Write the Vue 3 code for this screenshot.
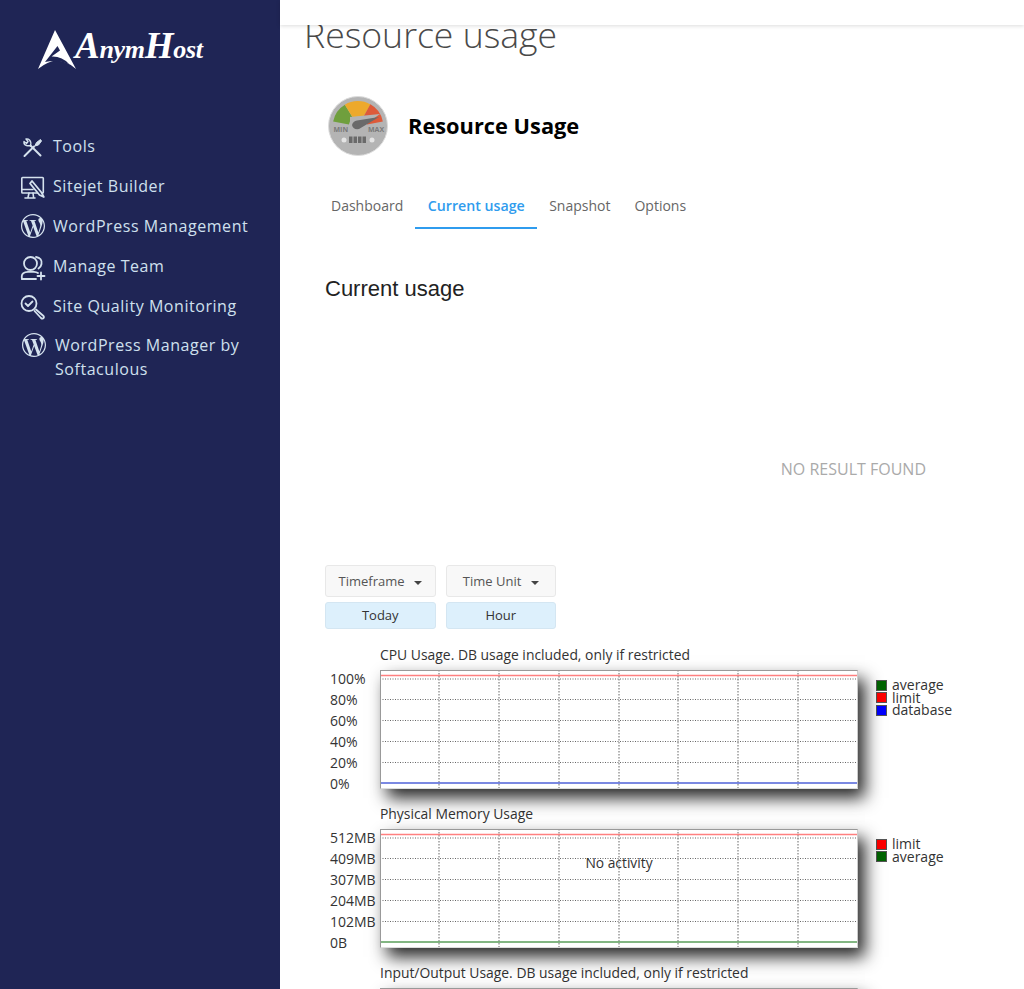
<script setup>
const wpPath = 'M21.469 6.825c.84 1.537 1.318 3.3 1.318 5.175 0 3.979-2.156 7.456-5.363 9.325l3.295-9.527c.615-1.54.82-2.771.82-3.864 0-.405-.026-.78-.07-1.11m-7.981.105c.647-.03 1.232-.105 1.232-.105.582-.075.514-.93-.067-.899 0 0-1.755.135-2.88.135-1.064 0-2.85-.15-2.85-.15-.585-.03-.661.855-.075.885 0 0 .54.061 1.125.09l1.68 4.605-2.37 7.08L5.354 6.9c.649-.03 1.234-.1 1.234-.1.585-.075.516-.93-.065-.896 0 0-1.746.138-2.874.138-.2 0-.438-.008-.69-.015C4.911 3.15 8.235 1.215 12 1.215c2.809 0 5.365 1.072 7.286 2.833-.046-.003-.091-.009-.141-.009-1.06 0-1.812.923-1.812 1.914 0 .89.513 1.643 1.06 2.531.411.72.89 1.643.89 2.977 0 .915-.354 1.994-.821 3.479l-1.075 3.585-3.9-11.61.001.014zM12 22.784c-1.059 0-2.081-.153-3.048-.437l3.237-9.406 3.315 9.087c.024.053.05.101.078.149-1.12.393-2.325.609-3.582.609M1.211 12c0-1.564.336-3.05.935-4.39L7.29 21.709C3.694 19.96 1.212 16.271 1.211 12M12 0C5.385 0 0 5.385 0 12s5.385 12 12 12 12-5.385 12-12S18.615 0 12 0'

const navItems = [
  { label: 'Tools', icon: 'tools' },
  { label: 'Sitejet Builder', icon: 'sitejet' },
  { label: 'WordPress Management', icon: 'wp' },
  { label: 'Manage Team', icon: 'team' },
  { label: 'Site Quality Monitoring', icon: 'quality' },
  { label: 'WordPress Manager by Softaculous', icon: 'wp', wrap: true },
]

const tabs = ['Dashboard', 'Current usage', 'Snapshot', 'Options']

const filters = [
  { name: 'Timeframe', value: 'Today' },
  { name: 'Time Unit', value: 'Hour' },
]

const gridX = [59, 119, 179, 239, 298, 358, 418]
const gridY = [9, 29.5, 50.5, 71.5, 92.5]

const charts = [
  {
    title: 'CPU Usage. DB usage included, only if restricted',
    labels: ['100%', '80%', '60%', '40%', '20%', '0%'],
    legend: [
      { name: 'average', color: '#006400' },
      { name: 'limit', color: '#ff0000' },
      { name: 'database', color: '#0000ff' },
    ],
    bottomColor: '#4f62d8',
  },
  {
    title: 'Physical Memory Usage',
    labels: ['512MB', '409MB', '307MB', '204MB', '102MB', '0B'],
    legend: [
      { name: 'limit', color: '#ff0000' },
      { name: 'average', color: '#006400' },
    ],
    bottomColor: '#5a9e5a',
    message: 'No activity',
  },
  {
    title: 'Input/Output Usage. DB usage included, only if restricted',
    labels: [],
    legend: [],
    bottomColor: '#4f62d8',
  },
]
</script>

<template>
  <div class="page">
    <aside class="sidebar">
      <div class="logo">
        <svg class="logo-mark" width="38" height="39" viewBox="0 0 38 39">
          <path d="M17 0 L38 39 Q30 31 18 30.500 Q10 31 0 39 Z" fill="#fff" />
          <path d="M7 32 L19.500 16 L22 20.500 L13.500 26.500 Q24 26 31 34 Q19 29 7 32 Z" fill="#1f2555" />
        </svg>
        <span class="logo-text"><span class="logo-cap">A</span>nym<span class="logo-cap">H</span>ost</span>
      </div>

      <nav class="nav">
        <a
          v-for="item in navItems"
          :key="item.label"
          class="nav-item"
          :class="{ 'nav-item-wrap': item.wrap }"
        >
          <svg class="nav-icon" width="24" height="24" viewBox="0 0 24 24" fill="none" stroke="#d5e2ee" stroke-width="1.600" stroke-linecap="round" stroke-linejoin="round">
            <template v-if="item.icon === 'tools'">
              <path d="M3.500 22 L13 12.500" stroke-width="2" />
              <path d="M14 11.500 L15.500 8.500 L19.500 5.500 L20.500 7 L17.500 11 L14 12" fill="#d5e2ee" stroke-width="1" />
              <path d="M9.500 11.500 L19.500 21.500" stroke-width="2" />
              <path d="M5 5 L7 7.500 L5.500 9.500 L3 7.500 Q2.500 10.500 5.500 11.500 Q8 12 9.500 11.500 Q10.500 8 8.500 6 Q7 4.500 5 5 Z" stroke-width="1.400" />
            </template>
            <template v-else-if="item.icon === 'sitejet'">
              <rect x="0.800" y="3.500" width="21.500" height="15.500" rx="0.800" />
              <path d="M0.800 15.500 H12 M8 19 L7 23.500 M4 24 H14 M12 19 L12.500 23" />
              <path d="M11 7 L20.500 18.500 L22.800 23 L18.500 21 L9 9.500 Z" fill="#1f2555" stroke-width="1.800" />
            </template>
            <template v-else-if="item.icon === 'wp'">
              <path :d="wpPath" fill="#d5e2ee" stroke="none" />
            </template>
            <template v-else-if="item.icon === 'team'">
              <circle cx="9.500" cy="9.500" r="6.500" stroke-width="1.800" />
              <path d="M15 3 Q21.500 4 20.500 10 Q20 13 17.500 14.500" stroke-width="1.800" />
              <path d="M0.800 24 V22 Q1 18 7 17.800 H13 Q15.500 18 17 19 M0.800 25 H15" stroke-width="1.800" />
              <path d="M20 18.500 V25.500 M16.500 22 H23.500" stroke-width="1.800" />
            </template>
            <template v-else>
              <circle cx="8" cy="9.500" r="7.500" stroke-width="1.800" />
              <path d="M4.500 9.500 L7 12 L11.500 7.500" stroke-width="1.800" />
              <path d="M15 15.500 L22.500 22 Q23.500 23.500 22 24.500 Q21 25 20 24 L13.500 17" stroke-width="1.800" />
            </template>
          </svg>
          <span class="nav-label">{{ item.label }}</span>
        </a>
      </nav>
    </aside>

    <main class="main">
      <header class="topbar"></header>
      <h1 class="page-title">Resource usage</h1>

      <div class="plugin-head">
        <svg class="gauge" width="60" height="60" viewBox="-30 -30 60 60">
          <circle r="29.500" fill="#b4b4b4" stroke="#dcdcdc" />
          <path d="M-17 -3 A17 17 0 0 1 -9 -14.500" fill="none" stroke="#6f9f3d" stroke-width="16" />
          <path d="M-9 -14.500 A17 17 0 0 1 8.500 -14.700" fill="none" stroke="#eda92c" stroke-width="16" />
          <path d="M8.500 -14.700 A17 17 0 0 1 17 -3" fill="none" stroke="#dd5a3a" stroke-width="16" />
          <path d="M-8 -9 L22 -12 L-2 5 Q-9 2 -8 -9 Z" fill="#b4b4b4" />
          <path d="M-6 -1 Q-5 -5 -1 -5.500 L21 -9 L1 3 Q-5 4 -6 -1 Z" fill="#6a6a6a" />
          <text class="gauge-text" x="-24.500" y="5.500">MIN</text>
          <text class="gauge-text" x="10" y="5.500">MAX</text>
          <circle cx="-14" cy="14" r="2.500" fill="#e4e4e4" />
          <circle cx="14" cy="14" r="2.500" fill="#e4e4e4" />
          <path d="M-9 10.500 h3.500 v6.500 h-3.500 z M-4.500 10.500 h3.500 v6.500 h-3.500 z M0 10.500 h3.500 v6.500 h-3.500 z M4.500 10.500 h3.500 v6.500 h-3.500 z" fill="#6a6a6a" />
        </svg>
        <h2 class="plugin-name">Resource Usage</h2>
      </div>

      <ul class="tabs">
        <li
          v-for="tab in tabs"
          :key="tab"
          class="tab"
          :class="{ 'tab-active': tab === 'Current usage' }"
        >
          {{ tab }}
        </li>
      </ul>

      <h3 class="section-title">Current usage</h3>
      <p class="no-result">NO RESULT FOUND</p>

      <div class="filters">
        <div v-for="filter in filters" :key="filter.name" class="filter">
          <button class="filter-btn">
            {{ filter.name }}
            <span class="caret"></span>
          </button>
          <div class="filter-value">{{ filter.value }}</div>
        </div>
      </div>

      <section v-for="chart in charts" :key="chart.title" class="chart">
        <div class="chart-title">{{ chart.title }}</div>
        <div class="chart-row">
          <div class="y-labels">
            <span v-for="label in chart.labels" :key="label">{{ label }}</span>
          </div>
          <div class="plot">
            <svg width="476" height="117" viewBox="1 1 476 117">
              <line
                v-for="y in gridY"
                :key="y"
                x1="0"
                x2="478"
                :y1="y"
                :y2="y"
                stroke="#666"
                stroke-dasharray="1 1.500"
              />
              <line
                v-for="x in gridX"
                :key="x"
                :x1="x"
                :x2="x"
                y1="0"
                y2="119"
                stroke="#666"
                stroke-dasharray="1.500 1.500"
              />
              <line x1="0" x2="478" y1="5.500" y2="5.500" stroke="#ff8080" stroke-width="1.500" />
              <line x1="0" x2="478" y1="113" y2="113" :stroke="chart.bottomColor" stroke-width="1.500" />
            </svg>
            <span v-if="chart.message" class="plot-message">{{ chart.message }}</span>
          </div>
          <ul class="legend">
            <li v-for="entry in chart.legend" :key="entry.name" class="legend-item">
              <span class="swatch" :style="{ background: entry.color }"></span>
              {{ entry.name }}
            </li>
          </ul>
        </div>
      </section>
    </main>
  </div>
</template>

<style>
html,
body {
  margin: 0;
  background: #fff;
  overflow: hidden;
}
</style>

<style scoped>
.page {
  display: flex;
  width: 1024px;
  height: 989px;
  overflow: hidden;
  font-family: 'Open Sans', sans-serif;
}

.sidebar {
  flex: 0 0 280px;
  background: #1f2555;
  color: #cfe0ee;
}

.logo {
  display: flex;
  align-items: center;
  gap: 0;
  padding: 29px 0 0 38px;
  height: 40px;
}

.logo-text {
  margin: -7px 0 0 -1px;
  font-family: 'Liberation Serif', serif;
  font-style: italic;
  font-weight: 700;
  font-size: 26px;
  letter-spacing: -0.3px;
  color: #fff;
}

.logo-cap {
  font-size: 37px;
}

.nav {
  display: flex;
  flex-direction: column;
  margin-top: 57px;
  padding-left: 21px;
}

.nav-item {
  display: flex;
  align-items: center;
  gap: 8px;
  height: 40px;
  font-size: 16px;
  letter-spacing: 0.55px;
}

.nav-icon {
  flex: none;
  overflow: visible;
}

.nav-item-wrap {
  align-items: flex-start;
  height: auto;
  padding: 7px 0 0 1px;
  gap: 9px;
  line-height: 24px;
  width: 225px;
}

.main {
  flex: 1;
  min-width: 0;
  position: relative;
  padding-left: 24px;
}

.topbar {
  position: relative;
  z-index: 2;
  height: 25px;
  margin: 0 0 0 -24px;
  background: #fff;
  box-shadow: 0 1px 4px rgba(0, 0, 0, 0.14);
}

.page-title {
  margin: -11px 0 0;
  font-size: 35.600px;
  font-weight: 300;
  line-height: 40px;
  color: #4a4a4a;
}

.plugin-head {
  display: flex;
  align-items: center;
  gap: 20px;
  margin: 42px 0 0 24px;
}

.plugin-name {
  margin: 0 0 2px;
  font-size: 21.800px;
  font-weight: 700;
  color: #000;
}

.tabs {
  display: flex;
  list-style: none;
  margin: 26px 0 0 15px;
  padding: 0;
}

.tab {
  padding: 0 12px;
  height: 47px;
  box-sizing: border-box;
  font-size: 14px;
  line-height: 48px;
  color: #666;
}

.tab-active {
  padding: 0 12.500px;
  font-weight: 600;
  font-size: 14.200px;
  color: #2f9cee;
  border-bottom: 2px solid #2f9cee;
}

.section-title {
  margin: 46px 0 0 21px;
  font-family: 'Liberation Sans', sans-serif;
  font-size: 22px;
  font-weight: 400;
  line-height: 28px;
  color: #222;
}

.no-result {
  margin: 156px 98px 0 0;
  font-size: 16px;
  line-height: 20px;
  color: #aaa;
  text-align: right;
}

.filters {
  display: flex;
  gap: 10px;
  margin: 86px 0 0 21px;
}

.filter {
  display: flex;
  flex-direction: column;
  gap: 5px;
  width: 110.500px;
}

.filter-btn {
  height: 32px;
  padding: 0;
  border: 1px solid #e8e8e8;
  border-radius: 3px;
  background: #f8f8f8;
  font-family: inherit;
  font-size: 13px;
  color: #555;
}

.caret {
  display: inline-block;
  margin-left: 6px;
  vertical-align: middle;
  border-top: 4px solid #444;
  border-left: 4px solid transparent;
  border-right: 4px solid transparent;
}

.filter-value {
  height: 27px;
  box-sizing: border-box;
  border: 1px solid #d4e6f2;
  border-radius: 3px;
  background: #ddf0fc;
  font-size: 13px;
  line-height: 25px;
  text-align: center;
  color: #333;
}

.chart {
  margin: 0 0 17px 26px;
}

.filters + .chart {
  margin-top: 18px;
}

.chart-title {
  height: 16px;
  margin: 0 0 7px 50px;
  font-size: 13.900px;
  line-height: 16px;
  white-space: nowrap;
  color: #333;
}

.chart-row {
  display: flex;
  align-items: flex-start;
  height: 119px;
}

.y-labels {
  display: flex;
  flex-direction: column;
  flex: 0 0 50px;
  margin-top: -2px;
  font-size: 14px;
  line-height: 21px;
  color: #333;
}

.plot {
  position: relative;
  flex: none;
  box-sizing: border-box;
  width: 478px;
  height: 119px;
  border: 1px solid #999;
  border-right-color: #ccc;
  border-bottom-color: #ddd;
  box-shadow: 7px 9px 16px rgba(0, 0, 0, 0.85);
  background: #fff;
}

.plot svg {
  display: block;
}

.plot-message {
  position: absolute;
  top: 24px;
  left: 0;
  right: 0;
  font-size: 13.800px;
  line-height: 18px;
  text-align: center;
  color: #333;
}

.legend {
  list-style: none;
  margin: 9px 0 0 18px;
  padding: 0;
  font-size: 14px;
  line-height: 12.500px;
  color: #333;
}

.legend-item {
  display: flex;
  align-items: center;
  gap: 5px;
  height: 12.500px;
}

.swatch {
  width: 9px;
  height: 9px;
  border: 1px solid #555;
}

.gauge-text {
  font-size: 7px;
  font-weight: 700;
  fill: #7a7a7a;
}
</style>
